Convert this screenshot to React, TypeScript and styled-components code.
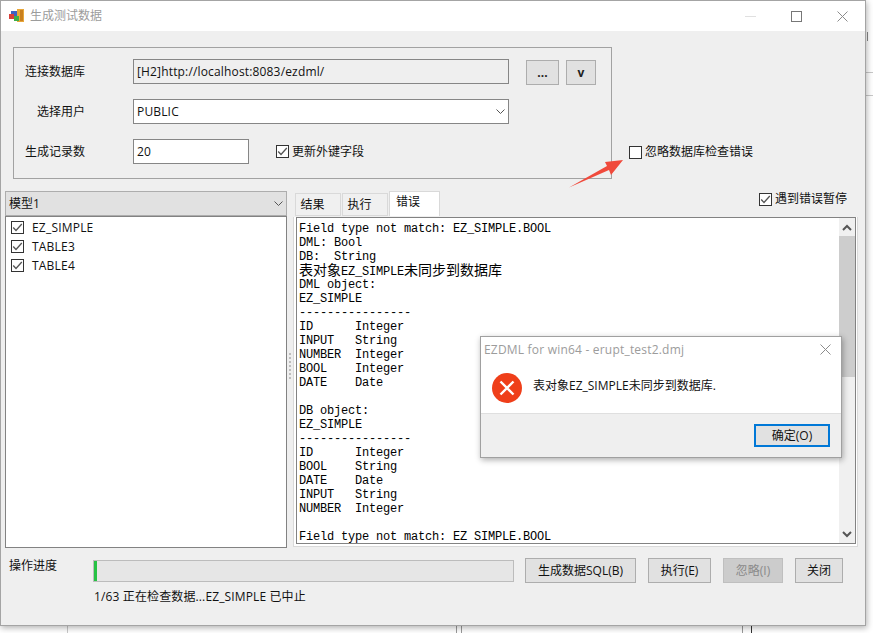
import React from "react";
import styled, { createGlobalStyle } from "styled-components";

const GlobalStyle = createGlobalStyle`
  html, body {
    margin: 0;
    padding: 0;
    background: #fff;
  }
  * {
    box-sizing: border-box;
  }
`;

const uiFont = `"Open Sans", "Noto Sans CJK SC", sans-serif`;

const Desktop = styled.div`
  position: relative;
  width: 873px;
  height: 633px;
  overflow: hidden;
  background: #fff;
  font: 12px/16px ${uiFont};
  color: #111;
`;

const BackLine = styled.div<{ $x: number; $y: number; $w: number; $h: number; $c?: string }>`
  position: absolute;
  left: ${(p) => p.$x}px;
  top: ${(p) => p.$y}px;
  width: ${(p) => p.$w}px;
  height: ${(p) => p.$h}px;
  background: ${(p) => p.$c || "#c8c8c8"};
`;

const Window = styled.div`
  position: absolute;
  left: 0;
  top: 0;
  width: 866px;
  height: 626px;
  display: flex;
  flex-direction: column;
  background: #efefef;
  border: 1px solid #a4a4a4;
  box-shadow: 1px 2px 6px rgba(0, 0, 0, 0.3);
`;

const TitleBar = styled.div`
  height: 30px;
  flex: none;
  display: flex;
  align-items: center;
  padding-left: 8px;
  background: #fff;
`;

const TitleText = styled.span`
  margin-left: 5px;
  color: #9c9c9c;
`;

const TitleButtons = styled.div`
  margin-left: auto;
  display: flex;
  align-items: center;
  padding-right: 17px;
  gap: 35px;
`;

const Body = styled.div`
  flex: 1;
  padding: 0 0 0 4px;
`;

const TopArea = styled.div`
  display: flex;
  height: 148px;
  padding-top: 16px;
`;

const GroupBox = styled.div`
  width: 599px;
  height: 132px;
  margin-left: 8px;
  padding-top: 11px;
  border: 1px solid #a2a2a2;
`;

const FormRow = styled.div`
  display: flex;
  align-items: center;
  height: 25px;
  margin-bottom: 15px;
`;

const FormLabel = styled.label`
  width: 71px;
  text-align: right;
  flex: none;
`;

const Field = styled.div<{ $w: number; $bg?: string }>`
  position: relative;
  width: ${(p) => p.$w}px;
  height: 25px;
  margin-left: 48px;
  padding-left: 3px;
  display: flex;
  align-items: center;
  letter-spacing: 0.16px;
  background: ${(p) => p.$bg || "#fff"};
  border: 1px solid #868686;
`;

const FieldChevron = styled.span`
  margin-left: auto;
  margin-right: 3px;
  display: flex;
`;

const SmallButton = styled.button<{ $w: number; $gap: number }>`
  width: ${(p) => p.$w}px;
  height: 25px;
  margin: 2px 0 0 ${(p) => p.$gap}px;
  padding: 0;
  background: #e1e1e1;
  border: 1px solid #adadad;
  font: bold 12px/16px ${uiFont};
  color: #222;
`;

const CheckLabel = styled.label<{ $gap?: number }>`
  display: flex;
  align-items: center;
  gap: 3px;
  height: 14px;
  margin-left: ${(p) => p.$gap || 0}px;
  white-space: nowrap;
`;

const Box = styled.span`
  width: 13px;
  height: 13px;
  flex: none;
  display: flex;
  align-items: center;
  justify-content: center;
  background: #fff;
  border: 1px solid #333;
`;

const IgnoreCheck = styled.div`
  margin: 98px 0 0 17px;
`;

const Arrow = styled.svg`
  position: absolute;
  left: 568px;
  top: 159px;
`;

const Middle = styled.div`
  display: flex;
  height: 357px;
  margin-top: 12px;
`;

const LeftPanel = styled.div`
  width: 282px;
  flex: none;
`;

const Combo = styled.div`
  height: 25px;
  display: flex;
  align-items: center;
  padding: 0 0 0 3px;
  background: #e1e1e1;
  border: 1px solid #adadad;
`;

const ModelList = styled.div`
  height: 332px;
  padding: 1px 0 0 5px;
  background: #fff;
  border: 1px solid #828282;
`;

const ListRow = styled.div`
  height: 19px;
  display: flex;
  align-items: center;
  letter-spacing: 0.2px;
  & > label {
    gap: 8px;
  }
`;

const Splitter = styled.div`
  width: 6px;
  flex: none;
  height: 357px;
  display: flex;
  flex-direction: column;
  align-items: center;
  justify-content: center;
  gap: 2px;
  padding-bottom: 7px;
`;

const SplitterDot = styled.span`
  width: 2px;
  height: 2px;
  background: #bdbdbd;
`;

const RightPanel = styled.div`
  width: 565px;
  flex: none;
`;

const TabRow = styled.div`
  height: 25px;
  display: flex;
  align-items: flex-end;
  padding-left: 2px;
`;

const Tab = styled.div<{ $active?: boolean }>`
  width: ${(p) => (p.$active ? 51 : 46)}px;
  height: ${(p) => (p.$active ? 25 : 23)}px;
  margin-right: ${(p) => (p.$active ? 0 : 1)}px;
  padding: ${(p) => (p.$active ? "2px 0 0 6px" : "3px 0 0 4.5px")};
  background: ${(p) => (p.$active ? "#fff" : "#f0f0f0")};
  border: 1px solid #d9d9d9;
  border-bottom: ${(p) => (p.$active ? "none" : "1px solid #d9d9d9")};
  font-size: 12px;
`;

const TabSide = styled.div`
  margin-left: auto;
  align-self: flex-start;
  padding: 1px 11px 0 0;
`;

const TabPane = styled.div`
  height: 330px;
  padding: 0 1px 2px 2px;
  background: #fff;
  border: 1px solid #d9d9d9;
  border-top: none;
`;

const Memo = styled.div`
  height: 327px;
  margin-top: 1px;
  display: flex;
  background: #fff;
  border: 1px solid #828282;
`;

const MemoText = styled.div`
  flex: 1;
  height: 325px;
  padding: 4px 0 0 2px;
  overflow: hidden;
  font: 12px/14px "Liberation Mono", monospace;
  letter-spacing: -0.2px;
  color: #000;
`;

const MemoLine = styled.div<{ $cjk?: boolean }>`
  height: ${(p) => (p.$cjk ? 16 : 14)}px;
  margin-top: ${(p) => (p.$cjk ? -2 : 0)}px;
  white-space: pre;
`;

const MemoCjk = styled.span`
  font: 14px/14px "Noto Sans CJK SC", sans-serif;
  letter-spacing: 0;
`;

const ScrollBar = styled.div`
  width: 16px;
  flex: none;
  display: flex;
  flex-direction: column;
  background: #f0f0f0;
`;

const ScrollCap = styled.div`
  height: 18px;
  flex: none;
  display: flex;
  align-items: center;
  justify-content: center;
`;

const ScrollThumb = styled.div`
  height: 141px;
  flex: none;
  background: #cdcdcd;
`;

const ScrollGap = styled.div`
  flex: 1;
`;

const ProgressRow = styled.div`
  display: flex;
  align-items: flex-start;
  height: 25px;
  margin-top: 10px;
`;

const ProgressLabel = styled.div`
  width: 84px;
  flex: none;
  margin: 0 0 0 4px;
`;

const ProgressBar = styled.div`
  width: 421px;
  height: 22px;
  flex: none;
  margin: 2px 11px 0 0;
  background: #e6e6e6;
  border: 1px solid #bcbcbc;
`;

const ProgressFill = styled.div`
  width: 3px;
  height: 100%;
  background: #26c244;
`;

const ActionButton = styled.button<{ $w: number; $gap?: number; disabled?: boolean }>`
  width: ${(p) => p.$w}px;
  height: 25px;
  flex: none;
  margin-left: ${(p) => p.$gap || 0}px;
  padding: 0;
  background: ${(p) => (p.disabled ? "#cccccc" : "#e1e1e1")};
  border: 1px solid ${(p) => (p.disabled ? "#bfbfbf" : "#adadad")};
  font: 12px/16px ${uiFont};
  color: ${(p) => (p.disabled ? "#8a8a8a" : "#111")};
`;

const StatusText = styled.div`
  margin: 6px 0 0 89px;
  white-space: pre;
  letter-spacing: 0.13px;
`;

const Dialog = styled.div`
  position: absolute;
  left: 480px;
  top: 336px;
  width: 362px;
  height: 122px;
  display: flex;
  flex-direction: column;
  background: #fff;
  border: 1px solid #a0a0a0;
  box-shadow: 1px 2px 6px rgba(0, 0, 0, 0.32);
`;

const DialogTitle = styled.div`
  height: 25px;
  flex: none;
  display: flex;
  align-items: center;
  justify-content: space-between;
  padding: 0 10px 0 3px;
  letter-spacing: 0.2px;
  color: #9c9c9c;
`;

const DialogMessage = styled.div`
  height: 52px;
  flex: none;
  display: flex;
  align-items: center;
  gap: 11px;
  padding: 0 0 0 11px;
  border-bottom: 1px solid #dfdfdf;
`;

const DialogText = styled.span`
  margin-bottom: 3px;
`;

const DialogFooter = styled.div`
  flex: 1;
  display: flex;
  justify-content: flex-end;
  padding: 10px 11px 0 0;
  background: #efefef;
`;

const DefaultButton = styled.button`
  width: 76px;
  height: 23px;
  padding: 0;
  background: #e1e1e1;
  border: 2px solid #0078d7;
  font: 12px/16px ${uiFont};
  color: #111;
`;

const Chevron = () => (
  <svg width="9" height="6" viewBox="0 0 9 6">
    <path d="M.5.5l4 4 4-4" fill="none" stroke="#555" strokeWidth="1" />
  </svg>
);

const CloseIcon = () => (
  <svg width="11" height="11" viewBox="0 0 11 11">
    <path d="M.5.5l10 10M10.5.5l-10 10" fill="none" stroke="#8c8c8c" strokeWidth="1" />
  </svg>
);

const Check = ({ checked, label, gap }: { checked?: boolean; label: string; gap?: number }) => (
  <CheckLabel $gap={gap}>
    <Box>
      {checked && (
        <svg width="11" height="11" viewBox="0 0 11 11">
          <path d="M1.2 5.5l2.8 3L9.8 2" fill="none" stroke="#555" strokeWidth="1.3" />
        </svg>
      )}
    </Box>
    {label}
  </CheckLabel>
);

const AppIcon = () => (
  <svg width="16" height="14" viewBox="0 0 16 14">
    <rect x="8" y="0" width="7" height="13" fill="#e8a73a" />
    <rect x="11" y="1" width="3" height="11" fill="#c9801f" />
    <rect x="2" y="2" width="6" height="5" fill="#3c62c4" />
    <rect x="0" y="5" width="5" height="5" fill="#d8403a" />
    <rect x="5" y="7" width="5" height="5" fill="#3fae49" />
  </svg>
);

const memoLines = [
  "Field type not match: EZ_SIMPLE.BOOL",
  "DML: Bool",
  "DB:  String",
  null,
  "DML object:",
  "EZ_SIMPLE",
  "----------------",
  "ID      Integer",
  "INPUT   String",
  "NUMBER  Integer",
  "BOOL    Integer",
  "DATE    Date",
  "",
  "DB object:",
  "EZ_SIMPLE",
  "----------------",
  "ID      Integer",
  "BOOL    String",
  "DATE    Date",
  "INPUT   String",
  "NUMBER  Integer",
  "",
  "Field type not match: EZ SIMPLE.BOOL",
];

const tables = ["EZ_SIMPLE", "TABLE3", "TABLE4"];

export default function App() {
  return (
    <Desktop>
      <GlobalStyle />
      <BackLine $x={866} $y={72} $w={7} $h={1} />
      <BackLine $x={866} $y={95} $w={7} $h={1} />
      <BackLine $x={867} $y={32} $w={1} $h={9} $c="#888" />
      <BackLine $x={67} $y={626} $w={1} $h={7} />
      <BackLine $x={456} $y={626} $w={1} $h={7} $c="#999" />
      <BackLine $x={461} $y={626} $w={1} $h={7} $c="#999" />
      <BackLine $x={742} $y={626} $w={1} $h={7} $c="#999" />
      <BackLine $x={751} $y={626} $w={1} $h={7} $c="#333" />

      <Window>
        <TitleBar>
          <AppIcon />
          <TitleText>生成测试数据</TitleText>
          <TitleButtons>
            <svg width="11" height="11" viewBox="0 0 11 11">
              <path d="M0 5.5h11" stroke="#e0e0e0" strokeWidth="1" />
            </svg>
            <svg width="11" height="11" viewBox="0 0 11 11">
              <rect x=".5" y=".5" width="10" height="10" fill="none" stroke="#777" />
            </svg>
            <CloseIcon />
          </TitleButtons>
        </TitleBar>

        <Body>
          <TopArea>
            <GroupBox>
              <FormRow>
                <FormLabel>连接数据库</FormLabel>
                <Field $w={376} $bg="#efefef">[H2]http://localhost:8083/ezdml/</Field>
                <SmallButton $w={33} $gap={17}>...</SmallButton>
                <SmallButton $w={30} $gap={7}>v</SmallButton>
              </FormRow>
              <FormRow>
                <FormLabel>选择用户</FormLabel>
                <Field $w={376}>
                  PUBLIC
                  <FieldChevron>
                    <Chevron />
                  </FieldChevron>
                </Field>
              </FormRow>
              <FormRow>
                <FormLabel>生成记录数</FormLabel>
                <Field $w={116}>20</Field>
                <Check checked label="更新外键字段" gap={27} />
              </FormRow>
            </GroupBox>
            <IgnoreCheck>
              <Check label="忽略数据库检查错误" />
            </IgnoreCheck>
          </TopArea>

          <Middle>
            <LeftPanel>
              <Combo>
                模型1
                <FieldChevron>
                  <Chevron />
                </FieldChevron>
              </Combo>
              <ModelList>
                {tables.map((name) => (
                  <ListRow key={name}>
                    <Check checked label={name} />
                  </ListRow>
                ))}
              </ModelList>
            </LeftPanel>

            <Splitter>
              {Array.from({ length: 7 }).map((_, i) => (
                <SplitterDot key={i} />
              ))}
            </Splitter>

            <RightPanel>
              <TabRow>
                <Tab>结果</Tab>
                <Tab>执行</Tab>
                <Tab $active>错误</Tab>
                <TabSide>
                  <Check checked label="遇到错误暂停" />
                </TabSide>
              </TabRow>
              <TabPane>
                <Memo>
                  <MemoText>
                    {memoLines.map((line, i) =>
                      line === null ? (
                        <MemoLine key={i} $cjk>
                          <MemoCjk>表对象</MemoCjk>EZ_SIMPLE<MemoCjk>未同步到数据库</MemoCjk>
                        </MemoLine>
                      ) : (
                        <MemoLine key={i}>{line}</MemoLine>
                      )
                    )}
                  </MemoText>
                  <ScrollBar>
                    <ScrollCap>
                      <svg width="10" height="7" viewBox="0 0 10 7">
                        <path d="M1 6l4-4 4 4" fill="none" stroke="#555" strokeWidth="2" />
                      </svg>
                    </ScrollCap>
                    <ScrollThumb />
                    <ScrollGap />
                    <ScrollCap>
                      <svg width="10" height="7" viewBox="0 0 10 7">
                        <path d="M1 1l4 4 4-4" fill="none" stroke="#555" strokeWidth="2" />
                      </svg>
                    </ScrollCap>
                  </ScrollBar>
                </Memo>
              </TabPane>
            </RightPanel>
          </Middle>

          <ProgressRow>
            <ProgressLabel>操作进度</ProgressLabel>
            <ProgressBar>
              <ProgressFill />
            </ProgressBar>
            <ActionButton $w={111}>生成数据SQL(B)</ActionButton>
            <ActionButton $w={63} $gap={12}>执行(E)</ActionButton>
            <ActionButton $w={60} $gap={12} disabled>忽略(I)</ActionButton>
            <ActionButton $w={48} $gap={12}>关闭</ActionButton>
          </ProgressRow>
          <StatusText>1/63 正在检查数据...EZ_SIMPLE 已中止</StatusText>
        </Body>
      </Window>

      <Arrow width="56" height="30" viewBox="568 159 56 30">
        <polygon points="569,187.5 607,166 605,162 623,160 611,175 609,170" fill="#f04a3c" />
      </Arrow>

      <Dialog>
        <DialogTitle>
          EZDML for win64 - erupt_test2.dmj
          <CloseIcon />
        </DialogTitle>
        <DialogMessage>
          <svg width="30" height="30" viewBox="0 0 30 30">
            <circle cx="15" cy="15" r="15" fill="#ef3f1a" />
            <path d="M8.5 8.5l13 13M21.5 8.5l-13 13" stroke="#fff" strokeWidth="2.4" />
          </svg>
          <DialogText>表对象EZ_SIMPLE未同步到数据库.</DialogText>
        </DialogMessage>
        <DialogFooter>
          <DefaultButton>确定(O)</DefaultButton>
        </DialogFooter>
      </Dialog>
    </Desktop>
  );
}
